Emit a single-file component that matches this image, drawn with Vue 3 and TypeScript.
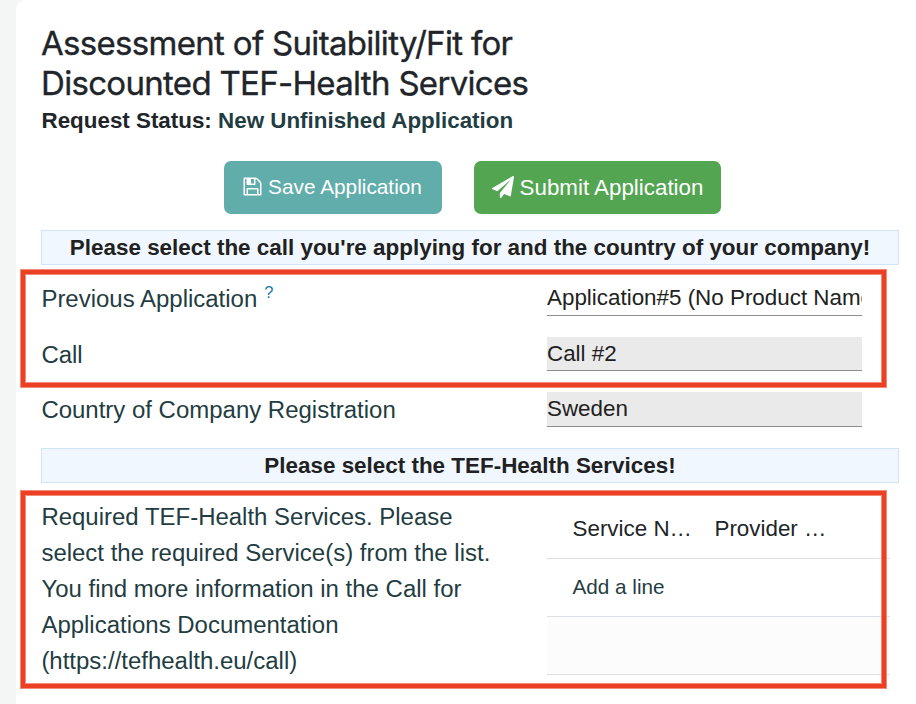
<script setup lang="ts">
import { ref } from 'vue'

interface Field {
  label: string
  value: string
  help?: boolean
  readonly?: boolean
}

const applicationFields = ref<Field[]>([
  { label: 'Previous Application', value: 'Application#5 (No Product Name)', help: true },
  { label: 'Call', value: 'Call #2', readonly: true },
])

const countryField: Field = { label: 'Country of Company Registration', value: 'Sweden', readonly: true }
const columns = ['Service N…', 'Provider …']
const description = [
  'Required TEF-Health Services. Please',
  'select the required Service(s) from the list.',
  'You find more information in the Call for',
  'Applications Documentation',
  '(https://tefhealth.eu/call)',
]
</script>

<template>
  <div class="page">
    <main class="sheet">
      <h1 class="title">
        Assessment of Suitability/Fit for<br />
        Discounted TEF-Health Services
      </h1>
      <p class="status">Request Status: <span class="state">New Unfinished Application</span></p>

      <div class="actions">
        <button class="btn save" type="button">
          <svg class="icon" viewBox="0 0 1792 1792" width="21" height="21" fill="currentColor">
            <path d="M512 1536h768v-384h-768v384zm896 0h128v-896q0-14-10-38.5t-20-34.5l-281-281q-10-10-34-20t-39-10v416q0 40-28 68t-68 28h-576q-40 0-68-28t-28-68v-416h-128v1280h128v-416q0-40 28-68t68-28h832q40 0 68 28t28 68v416zm-384-928v-320q0-13-9.5-22.5t-22.5-9.5h-192q-13 0-22.5 9.5t-9.5 22.5v320q0 13 9.5 22.5t22.5 9.5h192q13 0 22.5-9.5t9.5-22.5zm640 32v928q0 40-28 68t-68 28h-1344q-40 0-68-28t-28-68v-1344q0-40 28-68t68-28h928q40 0 88 20t76 48l280 280q28 28 48 76t20 88z" />
          </svg>
          <span>Save Application</span>
        </button>
        <button class="btn submit" type="button">
          <svg class="icon" viewBox="0 0 1792 1792" width="22" height="22" fill="currentColor">
            <path d="M1764 11q33 24 27 64l-256 1536q-5 29-32 45-14 8-31 8-11 0-24-5l-453-185-242 295q-18 23-49 23-13 0-22-4-19-7-30.5-23.5t-11.5-36.5v-349l864-1059-1069 925-395-162q-37-14-40-55-2-40 32-59l1664-960q15-9 32-9 20 0 36 11z" />
          </svg>
          <span>Submit Application</span>
        </button>
      </div>

      <h2 class="banner">Please select the call you're applying for and the country of your company!</h2>

      <section class="group fields">
        <div v-for="field in applicationFields" :key="field.label" class="row">
          <label class="label">{{ field.label }}<sup v-if="field.help" class="help">?</sup></label>
          <div class="value" :class="{ readonly: field.readonly }">{{ field.value }}</div>
        </div>
        <div class="highlight" />
      </section>

      <div class="row country">
        <label class="label">{{ countryField.label }}</label>
        <div class="value readonly">{{ countryField.value }}</div>
      </div>

      <h2 class="banner second">Please select the TEF-Health Services!</h2>

      <section class="group services">
        <p class="description">
          <span v-for="line in description" :key="line" class="line">{{ line }}</span>
        </p>
        <div class="list">
          <div class="cells">
            <span v-for="column in columns" :key="column" class="column">{{ column }}</span>
          </div>
          <div class="cells"><a class="add">Add a line</a></div>
          <div class="cells empty" />
        </div>
        <div class="highlight" />
      </section>
    </main>
  </div>
</template>

<style>
body {
  margin: 0;
  overflow: hidden;
}
</style>

<style scoped>
.page {
  box-sizing: border-box;
  height: 704px;
  padding-left: 16px;
  overflow: hidden;
  background: #f4f6f5;
  font-family: 'Liberation Sans', Arial, sans-serif;
  color: #212529;
}
.sheet {
  box-sizing: border-box;
  height: 704px;
  padding: 23px 17px 0 25px;
  background: #fff;
  border-top-left-radius: 9px;
}
.title {
  margin: 0;
  font: 400 33px/40px Inter, sans-serif;
  letter-spacing: -0.69px;
  -webkit-text-stroke: 0.35px currentColor;
  white-space: nowrap;
}
.status {
  margin: 4px 0 0;
  padding-left: 0.5px;
  font-size: 22.38px;
  line-height: 28px;
  font-weight: 700;
  white-space: nowrap;
}
.state {
  color: #1f3d42;
}
.actions {
  display: flex;
  gap: 32px;
  margin: 26px 0 16px 183px;
}
.btn {
  display: flex;
  align-items: center;
  justify-content: center;
  gap: 5px;
  box-sizing: border-box;
  height: 53px;
  padding: 0;
  border: 0;
  border-radius: 7px;
  color: #fff;
  font-family: inherit;
  white-space: nowrap;
}
.save {
  width: 218px;
  padding: 0 2px 2px 0;
  background: #60adab;
  font-size: 20.8px;
}
.submit {
  width: 247px;
  gap: 6px;
  background: #53a551;
  font-size: 22.35px;
}
.icon {
  flex: none;
}
.submit .icon {
  margin-bottom: 1px;
}
.banner {
  box-sizing: border-box;
  height: 35px;
  margin: 0;
  border: 1px solid #d0e4f7;
  background: #f0f7fe;
  color: #212121;
  font-size: 22.43px;
  line-height: 33px;
  text-align: center;
  white-space: nowrap;
}
.group {
  position: relative;
}
.fields {
  height: 122px;
  padding-top: 16px;
  box-sizing: border-box;
}
.row {
  display: grid;
  grid-template-columns: 506px 315px;
  height: 55px;
}
.label {
  padding-left: 0.4px;
  color: #1f3d42;
  font-size: 23.97px;
  line-height: 36px;
  white-space: nowrap;
}
.help {
  margin-left: 7px;
  color: #1a7ba5;
  font-size: 16.5px;
  line-height: 0;
  vertical-align: 9px;
}
.value {
  box-sizing: border-box;
  height: 35px;
  overflow: hidden;
  border-bottom: 1px solid #8d8d8d;
  color: #212121;
  font-size: 22.4px;
  line-height: 33px;
  white-space: nowrap;
}
.readonly {
  background: #eaeaea;
}
.fields .row + .row {
  padding-top: 1px;
  height: 54px;
}
.fields .row + .row .value {
  height: 34px;
}
.country {
  margin-top: 5px;
}
.second {
  margin-top: 1px;
}
.services {
  display: grid;
  grid-template-columns: 506px 343px;
  padding-top: 16px;
}
.description {
  margin: 0;
  padding-left: 0.4px;
  color: #1f3d42;
  font-size: 23.97px;
  line-height: 36px;
}
.line {
  display: block;
  white-space: nowrap;
}
.cells {
  display: flex;
  align-items: center;
  gap: 22.5px;
  box-sizing: border-box;
  height: 58px;
  padding-left: 25.5px;
  border-bottom: 1px solid #dcdfe4;
  font-size: 22.4px;
}
.cells:first-child {
  height: 60px;
}
.add {
  padding-bottom: 2px;
  color: #1f3d42;
  font-size: 20.7px;
}
.empty {
  background: #fcfcfc;
}
.highlight {
  position: absolute;
  box-sizing: border-box;
  left: -21px;
  width: 867px;
  border: 1px solid #f38b79;
  box-shadow: inset 0 0 0 4px #ec4025, inset 0 0 0 5px #f38b79;
  pointer-events: none;
}
.fields .highlight {
  top: 4px;
  height: 119px;
}
.services .highlight {
  top: 7px;
  height: 199px;
}
</style>
